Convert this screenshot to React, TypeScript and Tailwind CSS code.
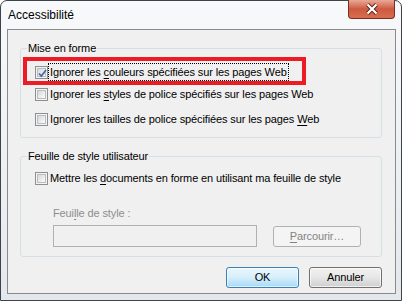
import React from "react";

// small Win7 style checkbox
const Check = ({ checked }: { checked?: boolean }) => (
  <span className="relative flex h-[13px] w-[13px] shrink-0 items-center justify-center border border-[#8e8f8f] bg-[#f4f4f4]">
    <span className="h-[9px] w-[9px] border border-[#b9bdc2] bg-gradient-to-br from-[#d6d8db] to-[#fbfbfb]" />
    {checked && (
      <svg className="absolute left-[1px] top-[1px]" width="11" height="11" viewBox="0 0 11 11">
        <path d="M2 5.5 L4.3 8 L9 2" fill="none" stroke="#4a6aa8" strokeWidth="1.8" />
      </svg>
    )}
  </span>
);

const U = ({ children }: { children: React.ReactNode }) => (
  <span className="underline underline-offset-[2px]">{children}</span>
);

export default function App() {
  return (
    <div className="relative h-[301px] w-[402px] bg-white font-['Liberation_Sans',sans-serif] text-[11px] leading-[15px] tracking-[-0.12px] text-black">
      <div className="flex h-full w-full flex-col rounded-t-[7px] border border-[#3e4349] bg-gradient-to-b from-[#f7f9fb] via-[#eef1f4] to-[#e4e8ec] pb-[6px] pl-[6px] pr-[5px]">
        {/* title bar */}
        <div className="flex h-[28px] shrink-0 items-start justify-between">
          <span className="mt-[7px] pl-[1px] text-[12px] tracking-normal text-black">Accessibilité</span>
          <div className="-mt-[1px] mr-[1px] flex h-[19px] w-[47px] items-center justify-center rounded-b-[4px] border border-t-0 border-[#7a2e22] bg-gradient-to-b from-[#e9a997] via-[#cd5a40] to-[#d86d4f]">
            <svg width="14" height="12" viewBox="0 0 14 12">
              <path d="M2.5 1.5 L11.5 10.5 M11.5 1.5 L2.5 10.5" stroke="#5a2318" strokeWidth="4" />
              <path d="M2.5 1.5 L11.5 10.5 M11.5 1.5 L2.5 10.5" stroke="#ffffff" strokeWidth="2.2" />
            </svg>
          </div>
        </div>

        {/* client area */}
        <div className="flex flex-1 flex-col border border-[#8a8a8a] bg-[#f0f0f0] pl-[12px] pr-[13px] pt-[11px]">
          <fieldset className="rounded-[3px] border border-[#d5dfe5] pb-[9px]">
            <legend className="ml-[6px] px-[1px]">Mise en forme</legend>
            <div className="pl-[14px]">
              <div className="mt-[7px] flex h-[18px] items-center">
                <Check checked />
                <span className="border border-dotted border-black px-[1px] leading-[16px]">
                  Ignorer les <U>c</U>ouleurs spécifiées sur les pages Web
                </span>
              </div>
              <div className="mt-[4px] flex h-[18px] items-center">
                <Check />
                <span className="ml-[2px]">
                  Ignorer les <U>s</U>tyles de police spécifiés sur les pages Web
                </span>
              </div>
              <div className="mt-[7px] flex h-[18px] items-center">
                <Check />
                <span className="ml-[2px]">
                  Ignorer les tailles de police spécifiées sur les pages <U>W</U>eb
                </span>
              </div>
            </div>
          </fieldset>

          <fieldset className="mt-[11px] rounded-[3px] border border-[#d5dfe5] pb-[9px]">
            <legend className="ml-[6px] px-[1px]">Feuille de style utilisateur</legend>
            <div className="pl-[14px]">
              <div className="mt-[5px] flex h-[18px] items-center">
                <Check />
                <span className="ml-[2px]">
                  Mettre les <U>d</U>ocuments en forme en utilisant ma feuille de style
                </span>
              </div>
              <div className="mt-[19px] pl-[18px] text-[#8d8d8d]">
                Feui<U>l</U>le de style :
              </div>
              <div className="mt-[4px] flex items-center pl-[18px]">
                <div className="h-[22px] w-[204px] border border-[#adb2b5] bg-[#f0f0f0]" />
                <div className="ml-[16px] flex h-[21px] w-[88px] items-center justify-center rounded-[3px] border border-[#adb2b5] bg-[#f4f4f4] text-[#838383]">
                  <U>P</U>arcourir…
                </div>
              </div>
            </div>
          </fieldset>

          <div className="mt-[10px] flex justify-end gap-[10px]">
            <button className="flex h-[21px] w-[73px] items-center justify-center rounded-[3px] border border-[#3c7fb1] bg-gradient-to-b from-[#eaf6fd] via-[#d6effc] to-[#a7d9f5] shadow-[inset_0_0_0_1px_rgba(255,255,255,0.6)]">
              OK
            </button>
            <button className="flex h-[21px] w-[73px] items-center justify-center rounded-[3px] border border-[#707070] bg-gradient-to-b from-[#f2f2f2] via-[#e6e6e6] to-[#cfcfcf] shadow-[inset_0_0_0_1px_rgba(255,255,255,0.7)]">
              Annuler
            </button>
          </div>
        </div>
      </div>

      {/* red highlight drawn over the screenshot */}
      <div className="absolute left-[23px] top-[57px] h-[28px] w-[283px] border-4 border-[#ed1c24]" />
    </div>
  );
}
